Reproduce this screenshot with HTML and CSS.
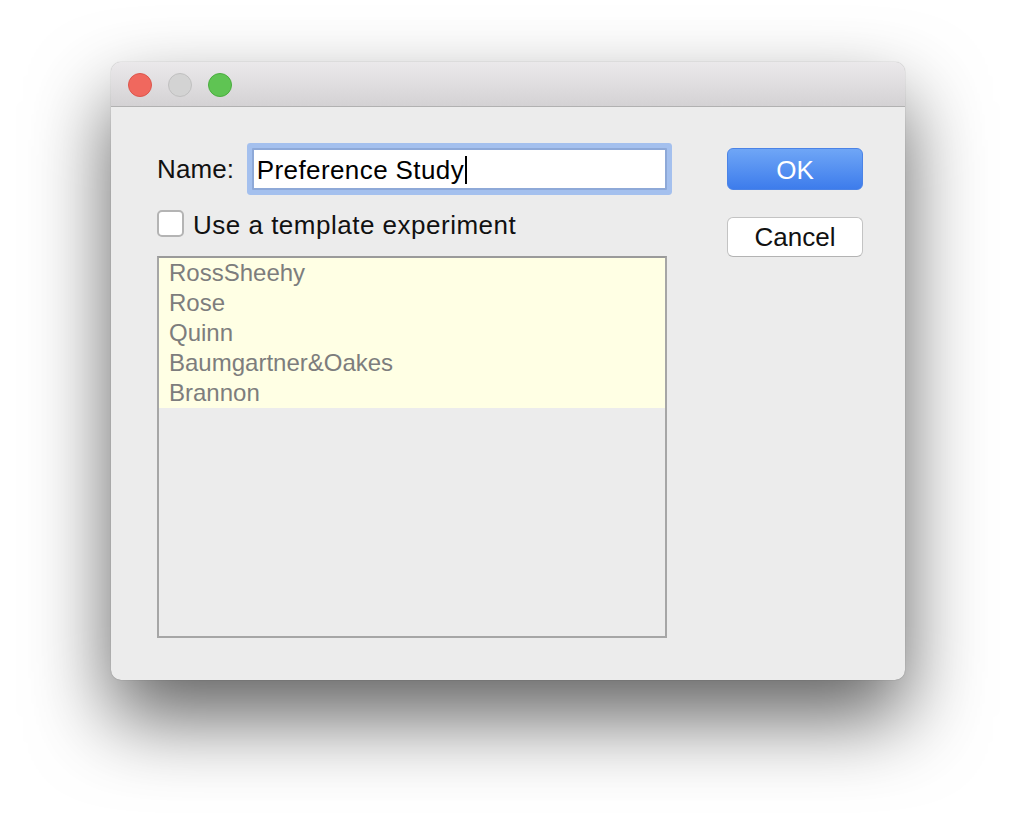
FILE: index.html
```html
<!DOCTYPE html>
<html>
<head>
<meta charset="utf-8">
<link rel="stylesheet" href="styles.css">
</head>
<body>
<div class="window">
  <div class="titlebar">
    <span class="light red"></span>
    <span class="light gray"></span>
    <span class="light green"></span>
  </div>
  <div class="content">
    <div class="left">
      <div class="name-row">
        <label class="label">Name:</label>
        <div class="field"><span class="field-text">Preference Study</span><span class="caret"></span></div>
      </div>
      <div class="check-row">
        <span class="checkbox"></span>
        <span class="check-label">Use a template experiment</span>
      </div>
      <div class="list">
        <div class="row">RossSheehy</div>
        <div class="row">Rose</div>
        <div class="row">Quinn</div>
        <div class="row">Baumgartner&amp;Oakes</div>
        <div class="row">Brannon</div>
      </div>
    </div>
    <div class="right">
      <div class="btn btn-ok">OK</div>
      <div class="btn btn-cancel">Cancel</div>
    </div>
  </div>
</div>
</body>
</html>
```

FILE: styles.css
```css
html, body {
  margin: 0;
  padding: 0;
  background: #ffffff;
}
body {
  width: 1016px;
  height: 840px;
  overflow: hidden;
  font-family: "Liberation Sans", Arial, sans-serif;
}
.window {
  margin: 62px 0 0 111px;
  width: 794px;
  height: 618px;
  background: #ececec;
  border-radius: 10px;
  box-shadow: 0 38px 80px rgba(0,0,0,0.62), 0 0 1px rgba(0,0,0,0.45);
  overflow: hidden;
}
.titlebar {
  height: 44px;
  border-bottom: 1px solid #b1b1b1;
  background: linear-gradient(#ebe9eb, #d4d2d4);
  display: flex;
  align-items: center;
  padding-left: 17px;
  gap: 16px;
}
.light {
  width: 24px;
  height: 24px;
  border-radius: 50%;
  box-sizing: border-box;
  margin-top: 2px;
}
.red { background: #f0685e; border: 1px solid #dc564c; }
.gray { background: #d3d3d3; border: 1px solid #c0c0c0; }
.green { background: #5fc453; border: 1px solid #4aad3e; }

.content {
  display: flex;
  padding: 41px 0 0 46px;
}
.left {
  width: 510px;
  display: flex;
  flex-direction: column;
}
.name-row {
  display: flex;
  align-items: center;
  height: 42px;
}
.label {
  font-size: 26px;
  color: #111;
  width: 95px;
  letter-spacing: 0.1px;
}
.field {
  width: 416px;
  height: 42px;
  box-sizing: border-box;
  background: #fff;
  border: 2px solid #8ea9d8;
  border-radius: 1px;
  box-shadow: 0 0 0 5px #a4c0ee;
  display: flex;
  align-items: center;
  padding-left: 3px;
}
.field-text {
  font-size: 26px;
  color: #000;
  letter-spacing: 0.4px;
  padding-top: 2px;
}
.caret {
  display: inline-block;
  width: 2px;
  height: 28px;
  background: #000;
  margin-left: 1px;
  margin-top: 2px;
}
.check-row {
  display: flex;
  align-items: center;
  margin-top: 20px;
  height: 27px;
}
.checkbox {
  width: 27px;
  height: 27px;
  box-sizing: border-box;
  background: #fff;
  border: 2px solid #b4b4b4;
  border-radius: 5px;
}
.check-label {
  font-size: 26px;
  color: #111;
  margin-left: 9px;
  letter-spacing: 0.5px;
  padding-top: 3px;
}
.list {
  margin-top: 19px;
  width: 510px;
  height: 382px;
  box-sizing: border-box;
  border: 2px solid #a6a6a6;
  border-top-color: #9a9a9a;
  background: #ececec;
}
.row {
  height: 30px;
  line-height: 30px;
  background: #ffffe4;
  color: #7d7d7d;
  font-size: 24px;
  padding-left: 10px;
}
.right {
  margin-left: 60px;
  display: flex;
  flex-direction: column;
}
.btn {
  width: 136px;
  box-sizing: border-box;
  border-radius: 6px;
  font-size: 26px;
  text-align: center;
}
.btn-ok {
  height: 42px;
  line-height: 42px;
  color: #fff;
  background: linear-gradient(#6fa6f6, #3d7cec);
  border: 1px solid #4b83e6;
}
.btn-cancel {
  margin-top: 27px;
  height: 40px;
  line-height: 38px;
  color: #111;
  background: #fff;
  border: 1px solid #c3c3c3;
  border-bottom-color: #b3b3b3;
}
```
